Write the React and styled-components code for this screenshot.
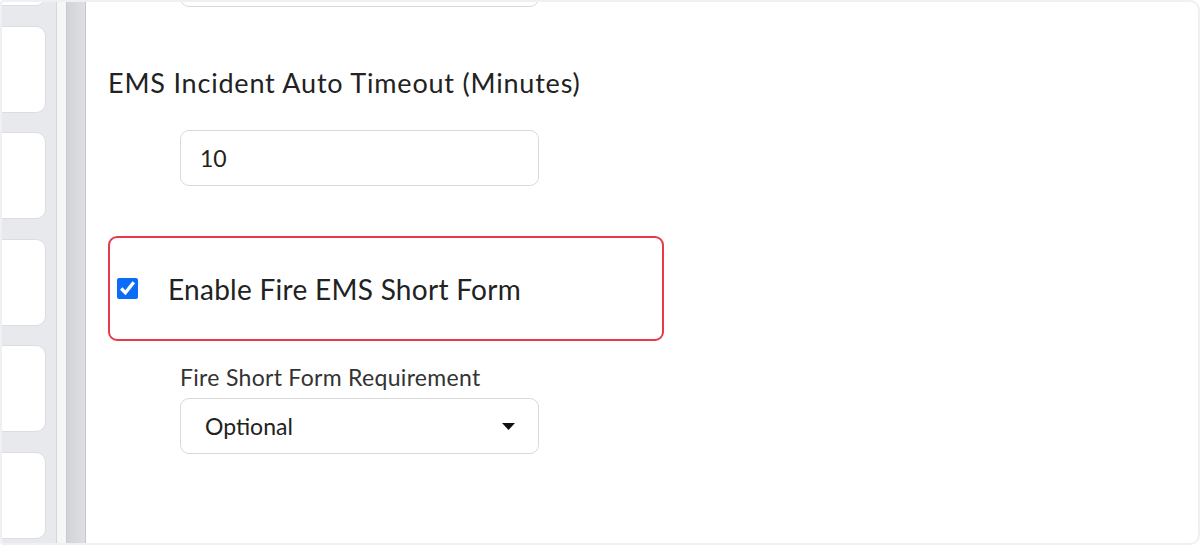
import React from 'react';
import styled, { createGlobalStyle } from 'styled-components';

const GlobalStyle = createGlobalStyle`
  html, body {
    margin: 0;
    padding: 0;
    background: #ffffff;
  }
  body {
    font-family: Lato, "Open Sans", Arial, sans-serif;
    color: #222;
  }
`;

const Frame = styled.div`
  box-sizing: border-box;
  width: 1200px;
  height: 545px;
  border: 2px solid #efeff4;
  border-radius: 4px 10px 10px 4px;
  display: flex;
  overflow: hidden;
  background: #fff;
`;

const Sidebar = styled.div`
  display: flex;
  flex-shrink: 0;
  height: 100%;
`;

const CardColumn = styled.div`
  width: 54px;
  background: #e8e9ed;
  display: flex;
  flex-direction: column;
  gap: 19.5px;
  overflow: hidden;
`;

const SideCard = styled.div`
  flex-shrink: 0;
  height: 87px;
  width: 56px;
  margin-left: -12px;
  background: #fff;
  border: 1px solid #dcdde2;
  border-radius: 10px;
  box-sizing: border-box;
  &:first-child {
    margin-top: -83px;
  }
`;

const Rail = styled.div`
  width: ${(p) => p.$w}px;
  background: ${(p) => p.$bg};
  border-left: 1px solid ${(p) => p.$line};
  box-sizing: border-box;
`;

const Content = styled.main`
  flex: 1;
  padding-left: 22px;
  display: flex;
  flex-direction: column;
  align-items: flex-start;
`;

const Field = styled.div`
  box-sizing: border-box;
  width: 359px;
  height: 56px;
  margin-left: 72px;
  border: 1px solid #d9d9dc;
  border-radius: 9px;
  display: flex;
  align-items: center;
  justify-content: space-between;
  padding: 0 23px 0 ${(p) => p.$pad || 19}px;
  font-size: 23px;
  color: #222;
  flex-shrink: 0;
`;

const CutField = styled(Field)`
  margin-top: -51px;
`;

const Heading = styled.div`
  margin-top: 61px;
  font-size: 27px;
  line-height: 30px;
  letter-spacing: 0.8px;
  color: #222;
`;

const Highlight = styled.label`
  box-sizing: border-box;
  margin-top: 50px;
  width: 556px;
  height: 105px;
  border: 2px solid #e83a4a;
  border-radius: 9px;
  display: flex;
  align-items: center;
  padding-left: 7px;
  gap: 30px;
  font-size: 28px;
  letter-spacing: 0.28px;
  color: #222;
`;

const Check = styled.input`
  width: 21px;
  height: 21px;
  margin: 0;
  accent-color: #0b6cf5;
`;

const SmallLabel = styled.div`
  margin-top: 24px;
  margin-left: 72px;
  font-size: 23px;
  line-height: 25px;
  letter-spacing: 0.3px;
  color: #333;
`;

const SelectBox = styled(Field)`
  margin-top: 8px;
`;

const Caret = () => (
  <svg width="13" height="7" viewBox="0 0 13 7">
    <path d="M0 0 H13 L6.5 7 Z" fill="#111" />
  </svg>
);

export default function App() {
  return (
    <>
      <GlobalStyle />
      <Frame>
        <Sidebar>
          <CardColumn>
            {[0, 1, 2, 3, 4, 5].map((i) => (
              <SideCard key={i} />
            ))}
          </CardColumn>
          <Rail $w={10} $bg="#f6f6f7" $line="#d6d7db" />
          <Rail $w={19} $bg="linear-gradient(90deg, #d2d3d7, #dfe0e3)" $line="#c9cacf" />
          <Rail $w={1} $bg="#c4c5ca" $line="#c4c5ca" />
        </Sidebar>
        <Content>
          <CutField />
          <Heading>EMS Incident Auto Timeout (Minutes)</Heading>
          <Field style={{ marginTop: 32 }}>10</Field>
          <Highlight>
            <Check type="checkbox" defaultChecked />
            <span>Enable Fire EMS Short Form</span>
          </Highlight>
          <SmallLabel>Fire Short Form Requirement</SmallLabel>
          <SelectBox $pad={24}>
            <span>Optional</span>
            <Caret />
          </SelectBox>
        </Content>
      </Frame>
    </>
  );
}
